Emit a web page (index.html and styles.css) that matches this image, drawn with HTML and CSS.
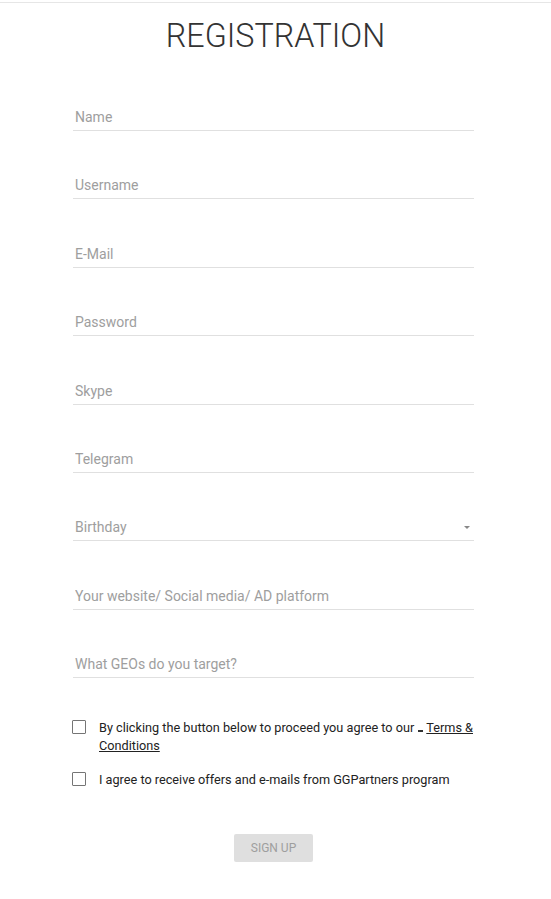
FILE: index.html
```html
<!DOCTYPE html>
<html>
<head>
<meta charset="utf-8">
<link rel="stylesheet" href="styles.css">
</head>
<body>
<div class="page">
  <div class="topline"></div>
  <h1 class="title">REGISTRATION</h1>
  <form class="form">
    <div class="field"><input class="input" placeholder="Name"></div>
    <div class="field"><input class="input" placeholder="Username"></div>
    <div class="field"><input class="input" placeholder="E-Mail"></div>
    <div class="field"><input class="input" placeholder="Password"></div>
    <div class="field"><input class="input" placeholder="Skype"></div>
    <div class="field"><input class="input" placeholder="Telegram"></div>
    <div class="field select"><input class="input" placeholder="Birthday"><span class="caret"></span></div>
    <div class="field"><input class="input" placeholder="Your website/ Social media/ AD platform"></div>
    <div class="field"><input class="input" placeholder="What GEOs do you target?"></div>

    <label class="check first">
      <span class="box"></span>
      <span class="check-text">By clicking the button below to proceed you agree to our <span class="gap"></span> <a class="link" href="#">Terms &amp; Conditions</a></span>
    </label>
    <label class="check">
      <span class="box"></span>
      <span class="check-text">I agree to receive offers and e-mails from GGPartners program</span>
    </label>

    <div class="actions"><button type="button" class="btn">Sign up</button></div>
  </form>
</div>
</body>
</html>
```

FILE: styles.css
```css
html, body {
  margin: 0;
  padding: 0;
  background: #fff;
}
body {
  font-family: Roboto, "Liberation Sans", Arial, sans-serif;
}
.page {
  padding-top: 2px;
}
.topline {
  height: 1px;
  background: #e6e6e6;
}
.title {
  margin: 13px 0 0;
  text-align: center;
  font-weight: 300;
  font-size: 32.3px;
  line-height: 40px;
  color: #333;
}
.form {
  width: 401px;
  margin-left: 73px;
  padding-top: 6.6px;
}
.field {
  position: relative;
  margin-top: 41.4px;
}
.input {
  display: block;
  box-sizing: border-box;
  width: 100%;
  height: 27px;
  margin: 0;
  padding: 0 0 0 2px;
  border: none;
  border-bottom: 1px solid #e0e0e0;
  outline: none;
  background: transparent;
  font-family: Roboto, "Liberation Sans", Arial, sans-serif;
  font-size: 14px;
  color: #333;
}
.input::placeholder {
  color: #9e9e9e;
  opacity: 1;
}
.caret {
  position: absolute;
  right: 4px;
  top: 12px;
  width: 0;
  height: 0;
  border-left: 3px solid transparent;
  border-right: 3px solid transparent;
  border-top: 3px solid #888;
}
.check {
  display: flex;
  align-items: flex-start;
  gap: 13px;
  font-size: 12.7px;
  line-height: 18px;
  color: #222;
  cursor: pointer;
}
.check.first {
  margin-top: 41px;
}
.check + .check {
  margin-top: 16px;
}
.box {
  flex: none;
  width: 14px;
  height: 14px;
  box-sizing: border-box;
  border: 1px solid #757575;
  border-radius: 1px;
  margin-top: 1px;
  margin-left: -1px;
}
.check-text {
  flex: 1;
}
.gap {
  display: inline-block;
  width: 5px;
  height: 2px;
  background: #333;
  vertical-align: baseline;
  margin-left: 1px;
}
.link {
  color: #222;
  text-decoration: underline;
}
.actions {
  display: flex;
  justify-content: center;
  margin-top: 45px;
}
.btn {
  width: 79px;
  height: 28px;
  border: none;
  border-radius: 2px;
  background: #dfdfdf;
  color: #9e9e9e;
  font-family: Roboto, "Liberation Sans", Arial, sans-serif;
  font-size: 12px;
  text-transform: uppercase;
  padding: 0;
}
```
